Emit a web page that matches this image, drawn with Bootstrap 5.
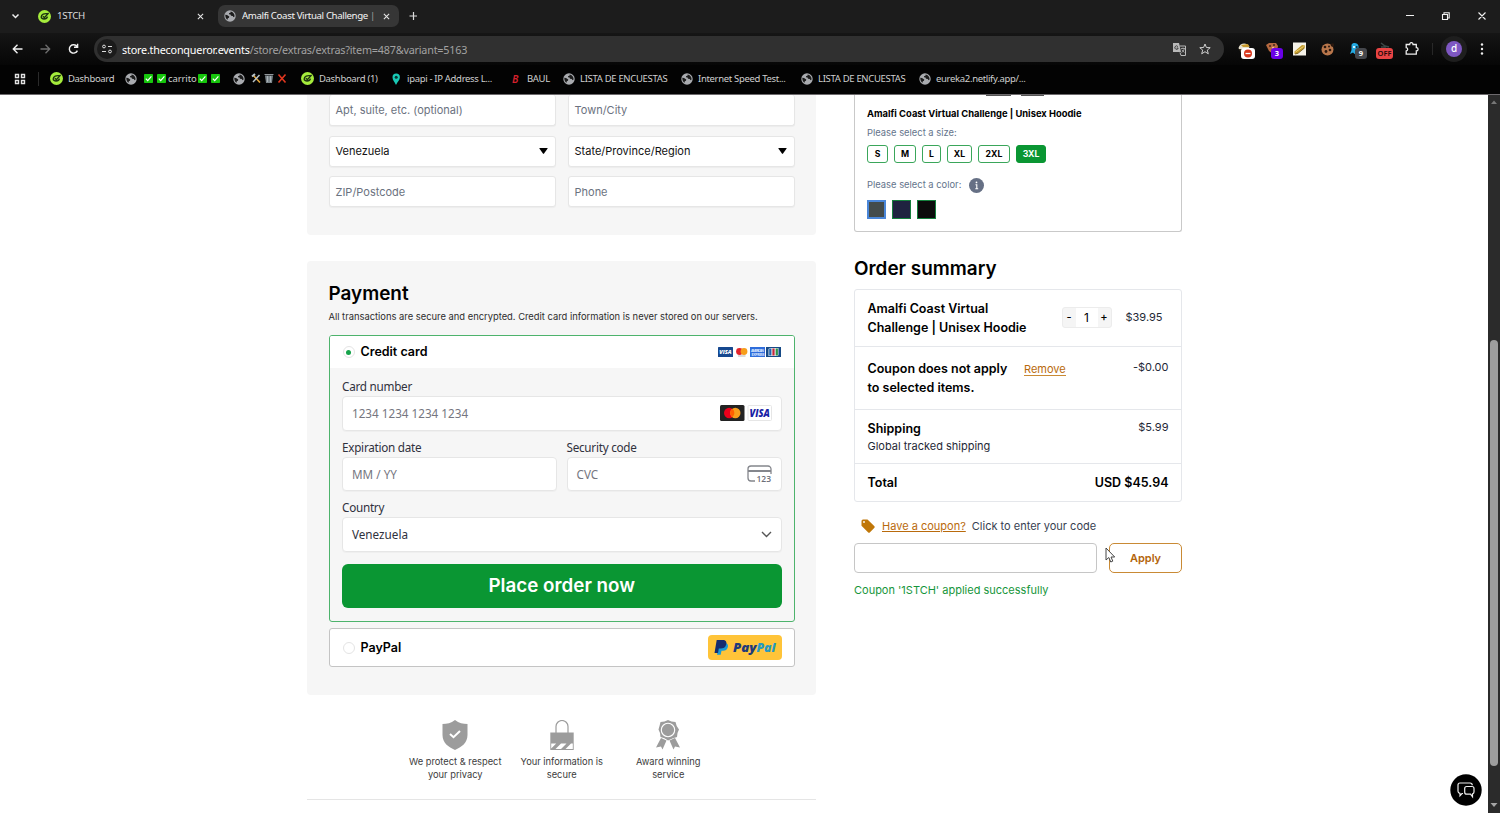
<!DOCTYPE html>
<html lang="en">
<head>
<meta charset="utf-8">
<title>Amalfi Coast Virtual Challenge | Checkout</title>
<link href="https://cdn.jsdelivr.net/npm/bootstrap@5.3.0/dist/css/bootstrap.min.css" rel="stylesheet">
<style>
html,body{height:813px;overflow:hidden}
body{font-family:Inter,sans-serif;font-size:11px;line-height:16px;color:#000;background:#fff}
svg{display:block;flex:none}
.chrome{height:94px;background:#030303;font-family:"Noto Sans",sans-serif;color:#dcdcdc;font-size:10px}
.chrome span{white-space:nowrap}
.tabstrip{height:33px;background:#1c1c1c;padding-top:5px}
.tabitem{height:22px;border-radius:7px;font-size:9.7px;letter-spacing:-.3px}
.tab-a{width:180px;margin-left:7px;padding:0 7px 0 7px}
.tab-b{width:181px;margin-left:7px;padding:0 9px 0 6px;background:#363636;color:#f4f4f4}
.tabtitle{margin-left:6px;letter-spacing:-.38px;overflow:hidden}
.toolbar{height:32px;background:linear-gradient(#151515,#060606)}
.omni{width:1130px;height:26px;border-radius:13px;background:#303030;margin-left:14px;font-size:10.8px;padding:0 12px 0 3px}
.url{margin-left:5px;letter-spacing:-.21px;margin-top:1px}
.siteinfo{width:20px;height:20px;border-radius:50%;background:#1b1b1b}
.dim{color:#a2a2a2}
.bookmarks{height:27px;padding-left:14px;font-size:9.5px;letter-spacing:-.32px;color:#cfcfcf}
.bm{display:flex;align-items:center;gap:5px;flex:none}
.ext{width:16px;height:16px;position:relative;margin-right:12px}
.tagb{position:absolute;left:4px;top:6px;height:11px;border-radius:3px;font-size:7.5px;line-height:11px;font-weight:700;text-align:center;color:#fff}
.avatar{width:26px;height:26px;border-radius:50%;background:#1e1e1e}
.avatar b{width:16px;height:16px;border-radius:50%;background:#7e57c2;color:#fff;font-size:10px;line-height:15px;text-align:center;font-weight:500}
.view{height:719px;border-top:1px solid #6d6a6d}
.page{width:1488px;padding-left:307px;gap:38px;overflow:hidden}
.colleft{width:509px}
.colright{width:328px}
.panelx{background:#f6f6f6}
.addr{height:140px;padding:0 21.5px;border-radius:0 0 4px 4px}
.fields{display:grid;grid-template-columns:227px 227px;column-gap:12px;row-gap:9.5px}
.field{height:31px;background:#fff;border:1px solid #e6e6e6;border-radius:3px;box-shadow:0 1px 1px #0000000a;padding:0 7px 0 6px;display:flex;align-items:center;justify-content:space-between;color:#6b7280}
.field.sel{color:#111}
.pay{height:434px;margin-top:26px;padding:21px 21.5px 0;border-radius:4px}
h2{font-size:18.9px;line-height:24px;font-weight:600;margin:0}
.sub{font-size:9.37px;line-height:14px;color:#2d2d2d;margin-top:4px;white-space:nowrap}
.ccbox{height:287px;margin-top:11px;border:1px solid #4db36c;border-radius:3px;overflow:hidden}
.opthead{height:32px;background:#fff;padding:0 12.5px 0 13px;font-size:12.5px;font-weight:600}
.radio{width:12px;height:12px;border:1px solid #e4e4e4;border-radius:50%;background:#fff;margin-right:6px;display:flex;align-items:center;justify-content:center}
.radio.on::after{content:"";width:5px;height:5px;border-radius:50%;background:#16a34a}
.stripe{padding:10px 12px 0 12.5px;font-family:"Noto Sans",sans-serif;color:#30313d;font-size:11.7px}
.lab{height:16px;line-height:16px;margin-bottom:2px;letter-spacing:-.25px}
.inp{height:34.500px;background:#fff;border:1px solid #e6e6e6;border-radius:4px;box-shadow:0 1px 1px #00000008;padding:0 9px;margin-bottom:8px;display:flex;align-items:center;justify-content:space-between;color:#757680}
.place{height:44px;background:#0a9633;color:#fff;border-radius:6px;font-family:Inter,sans-serif;font-size:18.8px;font-weight:600;margin-top:12px;border:0;width:100%;padding:0}
.ppbox{height:39px;margin-top:6px;border:1px solid #c4c4c4;border-radius:3px;background:#fff;padding:0 12px 0 13px;font-size:12.5px;font-weight:600}
.ppbtn{width:74px;height:25px;border-radius:4px;background:#ffc439}
.trust{margin-top:25px;padding-left:95px}
.trust>div{width:106.5px;display:flex;flex-direction:column;align-items:center;text-align:center;font-size:9.3px;line-height:12.5px;color:#3c3c3c;white-space:nowrap}
.trust svg{margin-bottom:6px}
.rule{border-top:1px solid #e5e5e5;margin-top:18px}
.hoodie{height:137px;border:1px solid #c9c9c9;border-top:0;border-radius:0 0 3px 3px;padding:0 12px}
.slate{color:#64748b;font-size:9.4px}
.size{height:18px;border:1px solid #3aa65a;border-radius:3px;font-size:8.7px;font-weight:700;line-height:16px;text-align:center}
.size.on{background:#0a9633;color:#fff;border-color:#0a9633}
.sw{width:19px;height:19px;border:1px solid #15803d}
.sum{height:213px;margin-top:8px;border:1px solid #e5e7eb;border-radius:3px}
.sum>div{border-bottom:1px solid #e5e7eb;padding:0 12.5px;display:flex}
.sum>div:last-child{border:0}
.ttl{font-size:12.5px;line-height:18.6px;font-weight:600;white-space:nowrap}
.num{color:#1f2937;font-size:11px}
.qty{width:50px;height:21px;border:1px solid #ececec;border-radius:3px;background:#f5f5f5;text-align:center;font-size:11px;line-height:19px}
.qty b{width:13px;font-weight:500}
.qty i{flex:1;background:#fff;font-style:normal;font-size:12px}
.orange{color:#b96a0c}
.cinput{width:243px;height:30px;border:1px solid #c6c6c6;border-radius:4px}
.apply{width:73px;height:30px;border:1px solid #c98a35;border-radius:5px;background:#fff;color:#b3650a;font-weight:600;font-size:11px;line-height:28px;padding:0}
.sbar{width:12px;background:#2b2b2b;display:flex;flex-direction:column;align-items:center}
.thumb{width:8px;height:426px;border-radius:4px;background:#9d9d9d;margin:234px 0 36px}
.chat{position:absolute;left:1449.5px;top:774px;width:32px;height:32px}
.cursor{position:absolute;left:1105px;top:547px}
.peek{position:absolute;top:95px;height:1px;background:#555}
</style>
<script src="https://cdn.jsdelivr.net/npm/bootstrap@5.3.0/dist/js/bootstrap.bundle.min.js"></script>
</head>
<body>
<svg width="0" height="0" class="position-absolute">
<defs>
<symbol id="globe" viewBox="0 0 12 12"><circle cx="6" cy="6" r="5.7" fill="#a9abaf"/><path d="M1.300 4.800 3 5 5.300 6.600 5 7.800 3.800 8.200 3.600 9.800C2 9 1.200 7 1.300 4.800ZM6.500 1.500 6.700 2.600 5 3.300 5 4.300 6.500 4.600 7 5.800 8.800 6 9.500 7.200 10.600 6.500C10.800 4 9 1.800 6.500 1.500Z" fill="#1c1c1c"/></symbol>
<symbol id="lime" viewBox="0 0 13 13"><circle cx="6.500" cy="6.500" r="6.500" fill="#a5ec3c"/><path d="M9.300 3.800C6.500 3.200 3.200 4.400 3.200 6.900c0 2.700 5.500 2.900 6.300-.3M4.800 6.200 6.400 7.600 10.600 3" fill="none" stroke="#1d3410" stroke-width="1.400"/></symbol>
<symbol id="check" viewBox="0 0 9 9"><rect width="9" height="9" rx=".7" fill="#16c60c"/><path d="M1.800 4.700 3.700 6.700 7.400 2.300" fill="none" stroke="#fff" stroke-width="1.200"/></symbol>
<symbol id="x" viewBox="0 0 8 8"><path d="M1 1 7 7M7 1 1 7" stroke="#e6e6e6" stroke-width="1.200"/></symbol>
</defs></svg>

<header class="chrome">
 <div class="tabstrip d-flex">
  <svg width="9" height="22" viewBox="0 0 9 22" style="margin-left:11px"><path d="M1.500 9.500 4.500 12.500 7.500 9.500" fill="none" stroke="#eee" stroke-width="1.500"/></svg>
  <div class="d-flex ms-1">
   <div class="tabitem tab-a d-flex align-items-center"><svg width="13" height="13"><use href="#lime"/></svg><span class="flex-grow-1" style="margin-left:6px">1STCH</span><svg width="7" height="7"><use href="#x"/></svg></div>
   <div class="tabitem tab-b d-flex align-items-center"><svg width="12" height="12"><use href="#globe"/></svg><span class="tabtitle flex-grow-1">Amalfi Coast Virtual Challenge <span class="dim">|</span></span><svg width="7" height="7"><use href="#x"/></svg></div>
   <svg width="10" height="22" viewBox="0 0 10 22" class="ms-2"><path d="M6.500 7v8M2.500 11h8" stroke="#ddd" stroke-width="1.200"/></svg>
  </div>
  <div class="ms-auto d-flex" style="padding-right:14px">
   <svg width="80" height="22" viewBox="0 0 80 22"><path d="M0 10.500h8M72.500 7.500 79.500 14.500M79.500 7.500 72.500 14.500M36.500 9.500h5v5h-5zM38 9.300v-1.500h5.200v5.200h-1.500" fill="none" stroke="#f0f0f0" stroke-width="1.100"/></svg>
  </div>
 </div>
 <div class="toolbar d-flex align-items-center">
  <svg width="68" height="14" viewBox="0 0 68 14" style="margin-left:12px"><path d="M10.500 7H1.500M5.500 2.800 1.300 7 5.500 11.200" fill="none" stroke="#f1f1f1" stroke-width="1.400"/><path d="M28.500 7h9M33.500 2.800 37.700 7 33.500 11.200" fill="none" stroke="#6f6f6f" stroke-width="1.300"/><path d="M65 4.500A4.200 4.200 0 1 0 65.400 8.600M65.600 1.800V5.200H62" fill="none" stroke="#f1f1f1" stroke-width="1.400"/></svg>
  <div class="omni d-flex align-items-center">
   <div class="siteinfo d-flex align-items-center justify-content-center"><svg width="10" height="10" viewBox="0 0 10 10"><path d="M6 2.500h4M0 7.500h4" stroke="#ddd" stroke-width="1.200"/><circle cx="2" cy="2.500" r="1.400" fill="none" stroke="#ddd"/><circle cx="8" cy="7.500" r="1.400" fill="none" stroke="#ddd"/></svg></div>
   <span class="url text-white">store.theconqueror.events<span class="dim">/store/extras/extras?item=487&amp;variant=5163</span></span>
   <svg class="ms-auto" width="13" height="13" viewBox="0 0 13 13"><path d="M0 0h6l2 9H0z" fill="#b9b9b9"/><path d="M6.500 3h6v9.500H8L7 9.500" fill="none" stroke="#b9b9b9"/><path d="M4.900 3.600A1.700 1.700 0 1 0 5.200 5H3.700" fill="none" stroke="#333" stroke-width=".9"/><path d="M8 5.500h4M10 4.500v1M8.500 9.500C10 8.800 11 7.500 11.200 5.700M8.800 6.800 11.300 9.500" fill="none" stroke="#b9b9b9" stroke-width=".8"/></svg>
   <svg width="12" height="12" viewBox="0 0 12 12" style="margin-left:13px;margin-right:1px"><path d="M6 1 7.400 4.500 11.200 4.700 8.300 7.100 9.300 10.800 6 8.700 2.700 10.800 3.700 7.100.8 4.700 4.600 4.500Z" fill="none" stroke="#d0d0d0"/></svg>
  </div>
  <div class="d-flex" style="margin-left:13px;padding-top:2px">
   <div class="ext"><svg width="16" height="16" viewBox="0 0 16 16"><path d="M1.500 6C3 .5 10 0 12.500 5L11 7H2z" fill="#e8e2d0"/><path d="M4 3 11 2 12.500 5 6 5z" fill="#c79a2c"/><path d="M2 7h9v4H4z" fill="#463a22"/></svg><span class="tagb bg-white" style="width:14px"><svg width="14" height="11" viewBox="0 0 14 11"><circle cx="7" cy="5.500" r="4" fill="#d9381e"/><path d="M4.500 5.500h5" stroke="#fff" stroke-width="1.300"/></svg></span></div>
   <div class="ext"><svg width="16" height="16" viewBox="0 0 16 16"><path d="M1 3 4 1 11 1 13 4 12 9 8 12 4 9z" fill="#b4683f"/><circle cx="5" cy="4" r="1" fill="#42231b"/><circle cx="8" cy="6" r="1.200" fill="#efb78c"/><circle cx="9" cy="3" r="1" fill="#42231b"/></svg><span class="tagb" style="width:12px;left:6px;background:#6a00e8">3</span></div>
   <div class="ext"><svg width="13" height="16" viewBox="0 0 13 16"><path d="M0 .5h13v13H0z" fill="#f5f2e8"/><path d="M1.500 9.500 9 3 12 3.500 11.500 6 4.500 11.500 1.500 12z" fill="#c29a28"/><path d="M2.500 10 10.500 4.500" stroke="#ecd27a"/><path d="M2 12 5 11.300 11.500 6" fill="none" stroke="#6d5313" stroke-width=".8"/></svg></div>
   <div class="ext"><svg width="13" height="16" viewBox="0 0 13 16"><circle cx="6.500" cy="7.500" r="6" fill="#b8764b"/><g fill="#29180f"><circle cx="4" cy="5" r="1.300"/><circle cx="8" cy="4.500" r="1"/><circle cx="5" cy="9.500" r="1.400"/><circle cx="9" cy="8" r="1.300"/><circle cx="11.500" cy="3" r="1.800"/></g></svg></div>
   <div class="ext"><svg width="16" height="16" viewBox="0 0 16 16"><path d="M2.500 3C3.500 0 9 .5 9.500 4v8L7.500 10.500 5.500 12 4 10.500 1 12 2.500 8z" fill="#24a9e1"/><circle cx="5" cy="5" r="1.100" fill="#fff"/><circle cx="7.800" cy="5" r=".9" fill="#123"/></svg><span class="tagb" style="width:12px;left:6px;background:#45474c">9</span></div>
   <div class="ext"><svg width="16" height="16" viewBox="0 0 16 16"><path d="M4 1 8 4 12 5M4 5 9 5" fill="none" stroke="#3b4645" stroke-width="1.500"/></svg><span class="tagb" style="width:17px;left:-1px;background:#e94444;color:#240808;font-weight:600">OFF</span></div>
   <svg width="14" height="16" viewBox="0 0 14 16"><path d="M1.200 2.500h3.500c0-2.500 3.300-2.500 3.300 0h3.300v3.200c2.400 0 2.400 3.300 0 3.300v3.200H1.200V9c2-.3 2-3 0-3.300z" fill="none" stroke="#eee" stroke-width="1.300"/></svg>
  </div>
  <div class="vr" style="height:12px;align-self:center;margin-left:13px;color:#777"></div>
  <div class="avatar d-flex align-items-center justify-content-center" style="margin-left:8px"><b>d</b></div>
  <svg width="4" height="14" viewBox="0 0 4 14" style="margin-left:13px"><g fill="#eee"><circle cx="2" cy="2.500" r="1.200"/><circle cx="2" cy="7" r="1.200"/><circle cx="2" cy="11.500" r="1.200"/></g></svg>
 </div>
 <div class="bookmarks d-flex align-items-center">
  <div class="bm" style="width:36px"><svg width="12" height="12" viewBox="0 0 12 12"><path d="M1.500 1.500h3v3h-3zM7.500 1.500h3v3h-3zM1.500 7.500h3v3h-3zM7.500 7.500h3v3h-3z" fill="none" stroke="#e2e2e2" stroke-width="1.400"/></svg><span style="margin-left:7px;width:1px;height:14px;background:#2a2a2a"></span></div>
  <div class="bm" style="width:75px"><svg width="13" height="13"><use href="#lime"/></svg><span>Dashboard</span></div>
  <div class="bm" style="width:108px"><svg width="12" height="12"><use href="#globe"/></svg><svg width="9" height="9" style="margin-left:2px"><use href="#check"/></svg><svg width="9" height="9" style="margin-left:-1px"><use href="#check"/></svg><span style="margin:0 -4px 0 -3px;letter-spacing:-.1px">carrito</span><svg width="9" height="9"><use href="#check"/></svg><svg width="9" height="9" style="margin-left:-1px"><use href="#check"/></svg></div>
  <div class="bm" style="width:68px"><svg width="12" height="12"><use href="#globe"/></svg><svg width="36" height="11" viewBox="0 0 36 11" style="margin-left:1px"><path d="M2 2 9 9.500" stroke="#e2a63a" stroke-width="1.600"/><path d="M8.500 2 2 9" stroke="#b6c2c9" stroke-width="1.500"/><path d="M1 3.500 4 1" stroke="#b6c2c9" stroke-width="2"/><path d="M14 2.500h8L21 10H15z" fill="#7c868b"/><path d="M13.500 1.500h9M16.500 3v6M19.500 3v6" stroke="#b5bdc1" stroke-width=".8"/><path d="M27.500 1.500 34.500 9.500M34.500 1.500 27.500 9.500" stroke="#e0371f" stroke-width="1.600"/></svg></div>
  <div class="bm" style="width:90px"><svg width="13" height="13"><use href="#lime"/></svg><span>Dashboard (1)</span></div>
  <div class="bm" style="width:120px"><svg width="11" height="12" viewBox="0 0 11 12"><path d="M5 12C3.500 9 1.500 7 1.500 4.300a3.700 3.700 0 0 1 7.400 0C8.900 7 6.500 9 5 12z" fill="#19c9b5"/><circle cx="5.200" cy="4.200" r="1.500" fill="#07332f"/></svg><span>ipapi - IP Address L...</span></div>
  <div class="bm" style="width:52px"><span style="width:10px;padding-left:1px;color:#d3202c;font-size:10.5px;font-weight:600;font-style:italic">B</span><span style="margin-left:1px">BAUL</span></div>
  <div class="bm" style="width:118px"><svg width="12" height="12"><use href="#globe"/></svg><span>LISTA DE ENCUESTAS</span></div>
  <div class="bm" style="width:120px"><svg width="12" height="12"><use href="#globe"/></svg><span>Internet Speed Test...</span></div>
  <div class="bm" style="width:118px"><svg width="12" height="12"><use href="#globe"/></svg><span>LISTA DE ENCUESTAS</span></div>
  <div class="bm"><svg width="12" height="12"><use href="#globe"/></svg><span>eureka2.netlify.app/...</span></div>
 </div>
</header>

<div class="view d-flex">
 <main class="page d-flex">
  <section class="colleft">
   <div class="panelx addr"><div class="fields">
    <div class="field" style="border-top:0">Apt, suite, etc. (optional)</div><div class="field" style="border-top:0">Town/City</div>
    <div class="field sel">Venezuela<svg width="9" height="6" viewBox="0 0 10 6" preserveAspectRatio="none"><path d="M1 0h8q1 0 .4.800L5.600 5.600q-.6.600-1.200 0L.6.800Q0 0 1 0"/></svg></div>
    <div class="field sel">State/Province/Region<svg width="9" height="6" viewBox="0 0 10 6" preserveAspectRatio="none"><path d="M1 0h8q1 0 .4.800L5.600 5.600q-.6.600-1.200 0L.6.800Q0 0 1 0"/></svg></div>
    <div class="field">ZIP/Postcode</div><div class="field">Phone</div>
   </div></div>
   <div class="panelx pay">
    <h2>Payment</h2>
    <div class="sub">All transactions are secure and encrypted. Credit card information is never stored on our servers.</div>
    <div class="ccbox">
     <div class="opthead d-flex align-items-center"><span class="radio on"></span>Credit card
      <svg class="ms-auto" width="63" height="10" viewBox="0 0 63 10"><rect width="15" height="10" rx=".5" fill="#16488f"/><text x="7.500" y="7.200" font-size="5.600" font-weight="800" font-style="italic" font-family="Open Sans" fill="#fff" text-anchor="middle">VISA</text><circle cx="21.500" cy="4.500" r="3.400" fill="#e3242b"/><circle cx="26" cy="4.500" r="3.400" fill="#f79e1b"/><path d="M20 9h7.500" stroke="#999" stroke-width=".7"/><rect x="32" width="15" height="10" fill="#2f6ddb"/><text x="39.500" y="4.500" font-size="3.600" font-weight="700" font-family="Open Sans" fill="#dbe8ff" text-anchor="middle" textLength="13">AMERICAN</text><text x="40" y="8.500" font-size="3.600" font-weight="700" font-family="Open Sans" fill="#dbe8ff" text-anchor="middle" textLength="13">EXPRESS</text><rect x="48" width="15" height="10" fill="#164a86"/><path d="M52 1h8.500v6.500q0 1.500-1.500 1.500H50.500V2.500Q50.500 1 52 1" fill="#e9eef2"/><path d="M52.300 1.500v7" stroke="#1f62ad" stroke-width="2.200"/><path d="M55.500 1.500v7" stroke="#c8273a" stroke-width="2.200"/><path d="M58.800 1.500v7" stroke="#2e9448" stroke-width="2.200"/></svg>
     </div>
     <div class="stripe">
      <div class="lab">Card number</div>
      <div class="inp">1234 1234 1234 1234<svg width="52" height="16" viewBox="0 0 52 16"><rect width="24.500" height="16" rx="1.500" fill="#222"/><circle cx="9.200" cy="8" r="5.200" fill="#eb001b"/><circle cx="15.300" cy="8" r="5.200" fill="#f79e1b"/><path d="M12.250 3.800a5.200 5.200 0 0 1 0 8.400 5.200 5.200 0 0 1 0-8.400" fill="#ff5f00"/><rect x="28" y=".5" width="23.500" height="15" rx="1" fill="#fff" stroke="#e6e6e6"/><text x="39.700" y="11.500" font-size="9.800" font-weight="800" font-style="italic" font-family="Open Sans" fill="#1a1fa5" text-anchor="middle" textLength="20.500" lengthAdjust="spacingAndGlyphs">VISA</text></svg></div>
      <div class="d-flex" style="gap:9.500px">
       <div class="w-50"><div class="lab">Expiration date</div><div class="inp">MM / YY</div></div>
       <div class="w-50"><div class="lab">Security code</div><div class="inp">CVC<svg width="25" height="18" viewBox="0 0 25 18"><path d="M24 9V4a3 3 0 0 0-3-3H4a3 3 0 0 0-3 3v9a3 3 0 0 0 3 3h4" fill="none" stroke="#84868c" stroke-width="1.300"/><path d="M1 6h23" stroke="#84868c" stroke-width="2"/><text x="9.500" y="17" font-size="8.500" font-weight="600" font-family="Open Sans" fill="#6d6e78">123</text></svg></div></div>
      </div>
      <div class="lab">Country</div>
      <div class="inp" style="color:#30313d">Venezuela<svg width="11" height="7" viewBox="0 0 11 7"><path d="M1 1 5.500 5.500 10 1" fill="none" stroke="#555" stroke-width="1.400"/></svg></div>
      <button class="place d-block">Place order now</button>
     </div>
    </div>
    <div class="ppbox d-flex align-items-center"><span class="radio"></span>PayPal
     <div class="ppbtn ms-auto"><svg width="74" height="25" viewBox="0 0 74 25"><path d="M11 8h5.500c3 0 4 2 3.300 4.300-.7 2.700-2.700 3.700-5.300 3.500h-1l-.8 4H9z" fill="#169bd7"/><path d="M8.700 5H14.500c3.500 0 4.400 2 3.700 4.500-.8 3-2.800 4-5.700 4H10.800L10 18H6.500z" fill="#142c6e"/><text x="25" y="17" font-size="12" font-weight="800" font-style="italic" font-family="Open Sans" fill="#203a7a" textLength="23.500" lengthAdjust="spacingAndGlyphs">Pay</text><text x="48.500" y="17" font-size="12" font-weight="800" font-style="italic" font-family="Open Sans" fill="#2499c2" textLength="19" lengthAdjust="spacingAndGlyphs">Pal</text></svg></div>
    </div>
   </div>
   <div class="trust d-flex">
    <div><svg width="26" height="30" viewBox="0 0 26 30"><path d="M13 0C9 3 5 4 .5 4v11c0 8 6 12 12.500 15 6.500-3 12.500-7 12.500-15V4C21 4 17 3 13 0z" fill="#9c9c9c"/><path d="M8 14 11.500 17.200 18 11" fill="none" stroke="#fff" stroke-width="2"/></svg>We protect &amp; respect<br>your privacy</div>
    <div><svg width="24" height="30" viewBox="0 0 24 30"><path d="M6 13V6.500a6 6 0 0 1 12 0V13" fill="none" stroke="#9c9c9c" stroke-width="1.200"/><path d="M.3 12.500h23.400V30H.3z" fill="#9c9c9c"/><path d="M1.200 23.500h5L1.200 28.500zM11 23.500h5.500l-5.500 5.500H5.500zM21 23.500h1.800v5.500H15.500z" fill="#fff"/></svg>Your information is<br>secure</div>
    <div><svg width="24" height="30" viewBox="0 0 24 30"><path d="M12 0l3.500 1.500 4 .5 1.200 4 2.300 3.500-1.500 3.500-.5 4-4 1.200L12 20.500l-3.500-2.300-4-1.200-.5-4L2.500 9.500 3.500 6 4.500 2l4-.5zM5 18 10.500 20.500 6.500 29.500 5 26.500 0 27.500zM19 18 13.500 20.500 17.500 29.500 19 26.500 24 27.500z" fill="#9c9c9c"/><circle cx="12" cy="10" r="6.700" fill="none" stroke="#fff" stroke-width="1.100"/></svg>Award winning<br>service</div>
   </div>
   <div class="rule"></div>
  </section>
  <aside class="colright">
   <div class="hoodie">
    <div class="fw-bold" style="font-size:9.4px;padding-top:11px">Amalfi Coast Virtual Challenge | Unisex Hoodie</div>
    <div class="slate" style="margin-top:3px">Please select a size:</div>
    <div class="d-flex" style="gap:6px;margin-top:4px"><div class="size" style="width:21px">S</div><div class="size" style="width:22px">M</div><div class="size" style="width:19px">L</div><div class="size" style="width:25px">XL</div><div class="size" style="width:32px">2XL</div><div class="size on" style="width:30px">3XL</div></div>
    <div class="slate d-flex align-items-center" style="margin-top:14px">Please select a color:<svg width="15" height="15" viewBox="0 0 15 15" style="margin-left:8px"><circle cx="7.500" cy="7.500" r="7.500" fill="#667085"/><path d="M6.500 6.700h1.300v4M6.300 10.700h2.900" fill="none" stroke="#fff" stroke-width="1.100"/><circle cx="7.500" cy="4.400" r=".9" fill="#fff"/></svg></div>
    <div class="d-flex" style="gap:6px;margin-top:7px"><div class="sw" style="background:#434b4b;border:2px solid #4a86d8"></div><div class="sw" style="background:#1f2340"></div><div class="sw" style="background:#0c0c0c"></div></div>
   </div>
   <h2 style="margin-top:25px">Order summary</h2>
   <div class="sum">
    <div style="height:57px;padding-top:10px"><span class="ttl" style="width:194px">Amalfi Coast Virtual<br>Challenge | Unisex Hoodie</span><div class="qty d-flex" style="margin-top:7px"><b>-</b><i>1</i><b>+</b></div><span class="num" style="margin:9px 0 0 14px">$39.95</span></div>
    <div style="height:63px;padding-top:13px"><span class="ttl" style="width:156.500px">Coupon does not apply<br>to selected items.</span><span class="num" style="color:#b96a0c;height:15px;line-height:16px;margin-top:1px;border-bottom:1px solid #c98a35">Remove</span><span class="num ms-auto" style="margin-top:-1px">-$0.00</span></div>
    <div style="height:54px;padding-top:10px"><span><span class="ttl d-block">Shipping</span><span class="num d-block" style="line-height:15px">Global tracked shipping</span></span><span class="num ms-auto" style="margin-top:-1px">$5.99</span></div>
    <div style="height:38px" class="align-items-center justify-content-between"><span class="ttl">Total</span><span class="ttl">USD $45.94</span></div>
   </div>
   <div class="d-flex align-items-center" style="margin:16px 0 9px;padding-left:7px;height:16px;color:#374151"><svg width="14" height="14" viewBox="0 0 14 14"><path d="M.5 2A1.500 1.500 0 0 1 2 .5H6.500L13.200 7q1 1 0 2L9 13.200q-1 1-2 0L.5 6.700z" fill="#c07708"/><circle cx="3" cy="3" r=".9" fill="#fff"/></svg><u class="orange" style="margin:0 6px 0 7px">Have a coupon?</u><span>Click to enter your code</span></div>
   <div class="d-flex justify-content-between"><div class="cinput"></div><button class="apply">Apply</button></div>
   <div style="margin-top:9px;color:#16963b">Coupon '1STCH' applied successfully</div>
  </aside>
 </main>
 <div class="sbar"><svg width="8" height="11" viewBox="0 0 8 11"><path d="M1 9 4 5.500 7 9z" fill="#777"/></svg><div class="thumb"></div><svg width="8" height="6" viewBox="0 0 8 6"><path d="M.5 1h7L4 5z" fill="#a5a5a5"/></svg></div>
</div>
<div class="peek" style="left:986px;width:25px"></div><div class="peek" style="left:1021px;width:23px"></div>
<svg class="chat" viewBox="0 0 32 32"><circle cx="16" cy="16" r="15.700" fill="#000"/><path d="M13 19.500H12L10 21.700V19.400Q8 19 8 17.200V11q0-2 2-2H20q2.200 0 2.300 2.300" fill="none" stroke="#eee" stroke-width="1.200"/><path d="M16.700 12.500h5.300q2 0 2 2v3.500q0 1.500-1.500 1.900V22.700l-2-2.500H16.700q-2 0-2-2v-3.700q0-2 2-2z" fill="none" stroke="#eee" stroke-width="1.200"/></svg>
<svg class="cursor" width="11" height="16" viewBox="0 0 11 16"><path d="M1 1v12l2.800-2.500L5.800 15l2-.9L6 10h3.700z" fill="#fff" stroke="#444" stroke-width="1"/></svg>
</body>
</html>
